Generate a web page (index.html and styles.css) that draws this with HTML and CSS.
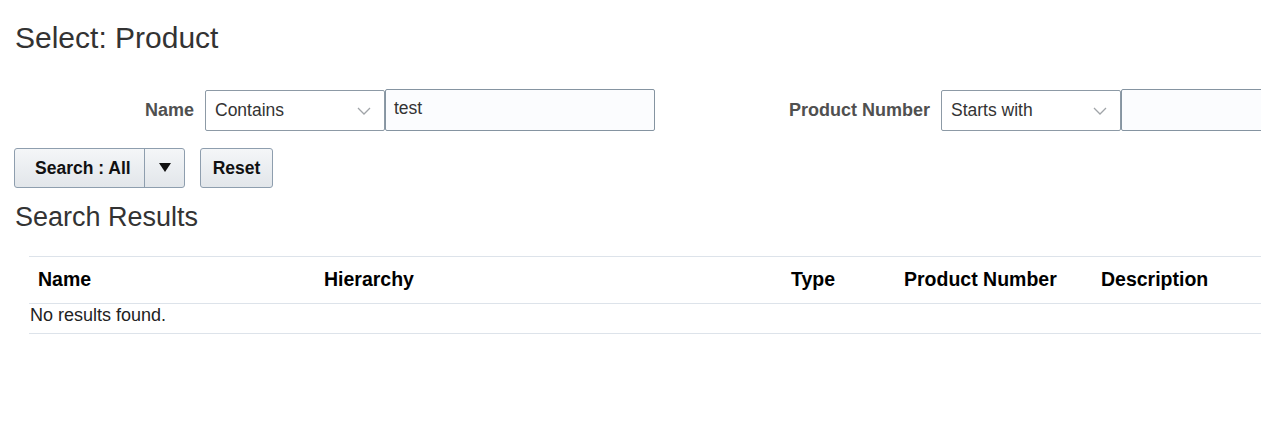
FILE: index.html
```html
<!DOCTYPE html>
<html>
<head>
<meta charset="utf-8">
<link rel="stylesheet" href="styles.css">
</head>
<body>
<div class="page">
  <h1 class="title">Select: Product</h1>
  <div class="form-row">
    <label class="label label-1">Name</label>
    <div class="select"><span>Contains</span><svg class="chev" width="14" height="8" viewBox="0 0 14 8"><path d="M1 1 L7 7 L13 1" fill="none" stroke="#a0a4a8" stroke-width="1.3"/></svg></div>
    <div class="input">test</div>
    <label class="label label-2">Product Number</label>
    <div class="select"><span>Starts with</span><svg class="chev" width="14" height="8" viewBox="0 0 14 8"><path d="M1 1 L7 7 L13 1" fill="none" stroke="#a0a4a8" stroke-width="1.3"/></svg></div>
    <div class="input"></div>
  </div>
  <div class="buttons">
    <div class="btn split"><span class="btn-main">Search : All</span><span class="btn-arrow"><svg width="12" height="9" viewBox="0 0 12 9"><path d="M0 0 H12 L6 9 Z" fill="#111"/></svg></span></div>
    <div class="btn reset">Reset</div>
  </div>
  <h2 class="section">Search Results</h2>
  <table class="results">
    <colgroup>
      <col class="c-name"><col class="c-hier"><col class="c-type"><col class="c-pn"><col class="c-desc">
    </colgroup>
    <thead>
      <tr>
        <th>Name</th>
        <th>Hierarchy</th>
        <th>Type</th>
        <th class="th-pn">Product Number</th>
        <th>Description</th>
      </tr>
    </thead>
    <tbody>
      <tr><td colspan="5" class="empty">No results found.</td></tr>
    </tbody>
  </table>
</div>
</body>
</html>
```

FILE: styles.css
```css
html, body {
  margin: 0;
  padding: 0;
  background: #fff;
  overflow: hidden;
}
body {
  font-family: "Liberation Sans", Arial, sans-serif;
  color: #333;
}
.page {
  width: 1261px;
  overflow: hidden;
  padding-top: 20px;
}
.title {
  margin: 0 0 0 15px;
  font-size: 30px;
  line-height: 36px;
  font-weight: normal;
  color: #333;
}
.form-row {
  display: flex;
  align-items: center;
  margin-top: 33px;
  height: 42px;
  width: 1400px;
}
.label {
  font-size: 18px;
  font-weight: bold;
  color: #505050;
  text-align: right;
  padding-right: 11px;
  padding-top: 1px;
  box-sizing: border-box;
  white-space: nowrap;
}
.label-1 { width: 205px; }
.label-2 { width: 286px; }
.select {
  width: 180px;
  height: 41px;
  box-sizing: border-box;
  border: 1px solid #8d9aa6;
  border-radius: 2px;
  background: #fff;
  display: flex;
  align-items: center;
  justify-content: space-between;
  padding: 0 13px 0 9px;
  font-size: 17.5px;
  color: #333;
}
.chev { margin-top: 1px; }
.input {
  width: 270px;
  height: 42px;
  box-sizing: border-box;
  border: 1px solid #8594a1;
  border-radius: 2px;
  background: #fbfcfe;
  padding: 0 0 3px 8px;
  font-size: 17.5px;
  color: #333;
  display: flex;
  align-items: center;
}
.buttons {
  display: flex;
  gap: 15px;
  margin: 17px 0 0 14px;
}
.btn {
  height: 40px;
  box-sizing: border-box;
  border: 1px solid #8e9eae;
  border-radius: 3px;
  background: linear-gradient(#f4f6f8, #e2e6ea);
  font-size: 17.5px;
  font-weight: bold;
  color: #111;
  display: flex;
  align-items: center;
}
.split { width: 171px; }
.btn-main {
  padding: 0 0 0 20px;
  height: 100%;
  display: flex;
  align-items: center;
  border-right: 1px solid #8e9eae;
  box-sizing: border-box;
  width: 130px;
  white-space: nowrap;
}
.btn-arrow {
  flex: 1;
  display: flex;
  justify-content: center;
  align-items: center;
  padding-bottom: 1px;
}
.reset {
  width: 73px;
  justify-content: center;
}
.section {
  margin: 13px 0 0 15px;
  font-size: 27px;
  line-height: 32px;
  font-weight: normal;
  color: #333;
}
.results {
  margin: 23px 0 0 29px;
  border-collapse: collapse;
  table-layout: fixed;
  width: 1232px;
}
.c-name { width: 286px; }
.c-hier { width: 467px; }
.c-type { width: 114px; }
.c-pn { width: 196px; }
.c-desc { width: 169px; }
.results th {
  height: 47px;
  box-sizing: border-box;
  padding: 0 0 1px 9px;
  text-align: left;
  font-size: 19.5px;
  font-weight: bold;
  color: #000;
  border-top: 1px solid #dde3ea;
  border-bottom: 1px solid #dde3ea;
  vertical-align: middle;
  white-space: nowrap;
}
.results th.th-pn { padding-left: 8px; }
.results td.empty {
  height: 20px;
  padding: 1px 0 8px 1px;
  font-size: 18px;
  line-height: 20px;
  color: #222;
  border-bottom: 1px solid #dde3ea;
  vertical-align: top;
}
```
